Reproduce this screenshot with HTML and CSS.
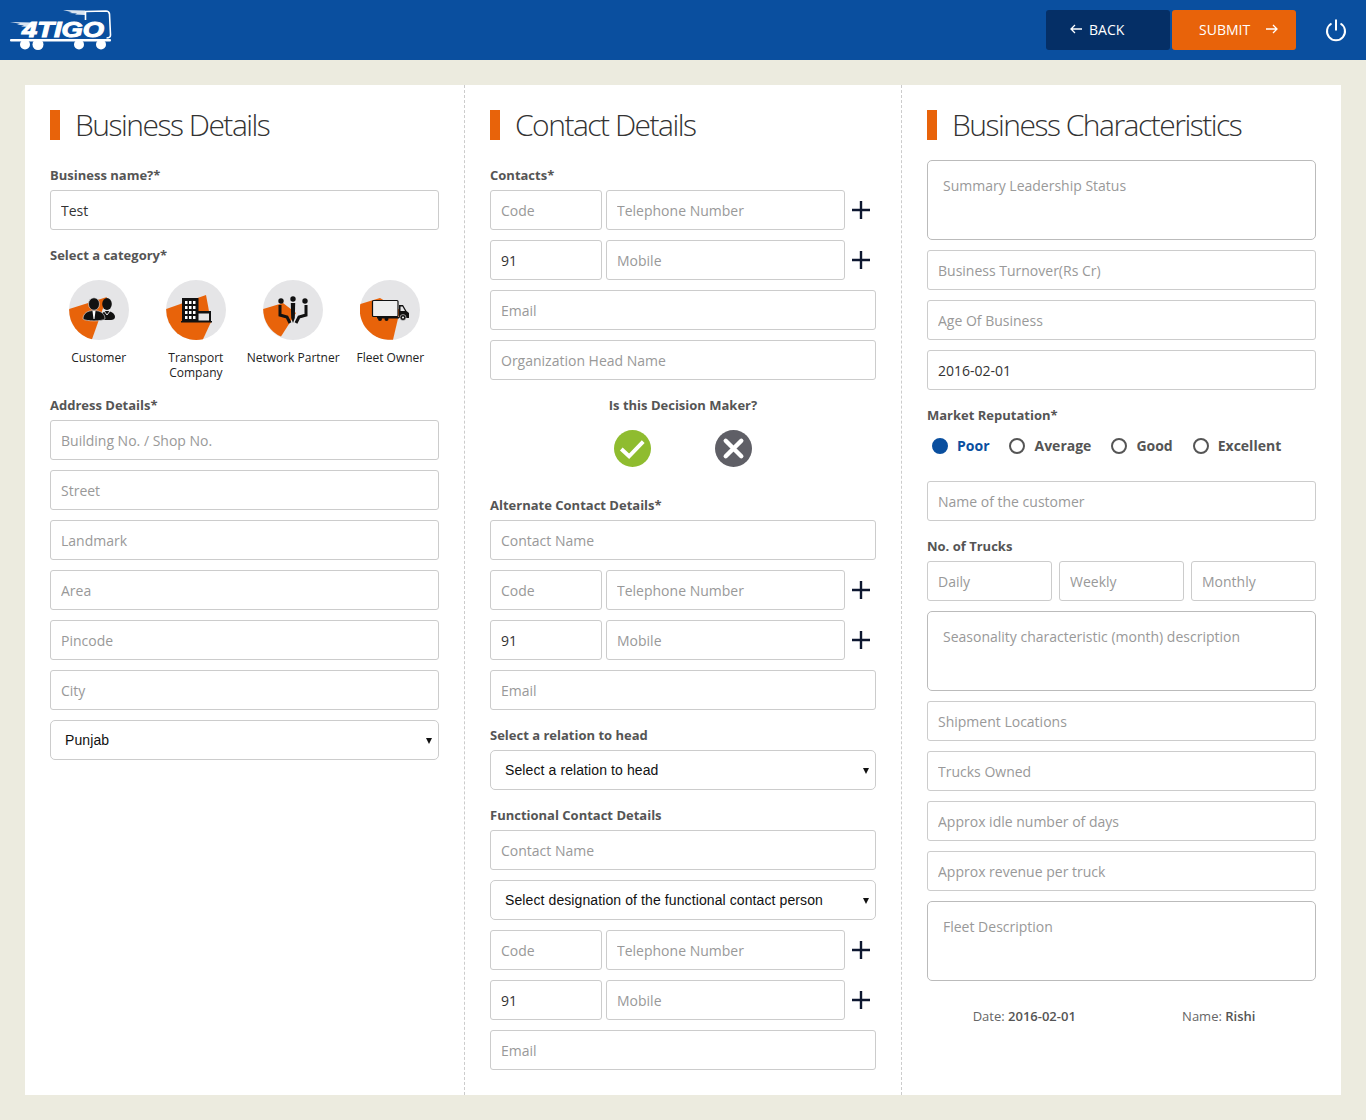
FILE: index.html
```html
<!DOCTYPE html>
<html lang="en">
<head>
    <meta charset="UTF-8">
    <meta name="viewport" content="width=device-width, initial-scale=1.0">
    <title>Business Details</title>
    <link rel="stylesheet" href="styles.css">
</head>
<body>
    <svg class="sprites" width="0" height="0">
        <symbol id="plus" viewBox="0 0 18 18">
            <path d="M9 0v18M0 9h18" stroke="#0d1730" stroke-width="2.4" fill="none"/>
        </symbol>
    </svg>

    <header class="topbar">
        <svg class="logo" width="104" height="50" viewBox="0 0 104 50">
            <g fill="#fff">
                <path d="M53 9l22 .5V14l-10-.5 2-1-8-.5 3-.8z" opacity=".85"/>
                <path d="M0 21l22 .5-2 4.500-9-.5 3-1-7-1 3-.8z" opacity=".85"/>
                <rect x="0" y="38" width="101" height="2.500" rx="1"/>
                <circle cx="15" cy="43.500" r="5"/>
                <circle cx="28" cy="43.500" r="5.500"/>
                <circle cx="69" cy="43.500" r="5"/>
                <circle cx="91" cy="43.500" r="5"/>
            </g>
            <path d="M75.500 19V10.500L96 10q3 0 3.500 3l1 21q0 3-4 3" fill="none" stroke="#fff" stroke-width="1.600"/>
            <text class="logo-text" x="12" y="36" textLength="82" lengthAdjust="spacingAndGlyphs">4TIGO</text>
        </svg>
        <div class="topbar-actions">
            <button class="btn btn-back" type="button">
                <svg width="12" height="10" viewBox="0 0 12 10"><path d="M12 5H1.500M5 1L1 5l4 4" fill="none" stroke="#fff" stroke-width="1.300"/></svg>
                BACK
            </button>
            <button class="btn btn-submit" type="button">
                SUBMIT
                <svg width="12" height="10" viewBox="0 0 12 10"><path d="M0 5h10.500M7 1l4 4-4 4" fill="none" stroke="#fff" stroke-width="1.300"/></svg>
            </button>
            <svg class="power" width="22" height="24" viewBox="0 0 22 24">
                <path d="M11 1.500v11M6.500 5.500a9 9 0 1 0 9 0" fill="none" stroke="#fff" stroke-width="2"/>
            </svg>
        </div>
    </header>

    <main class="page">
        <div class="panel">
            <section class="col">
                <h2 class="title">Business Details</h2>
                <label class="lbl lbl-first">Business name?*</label>
                <input class="inp" type="text" value="Test">

                <label class="lbl">Select a category*</label>
                <div class="cats">
                    <div class="cat">
                        <svg width="60" height="60" viewBox="0 0 60 60">
                            <circle cx="30" cy="30" r="30" fill="#e5e5e7"/>
                            <path d="M.2 29L38 17 23 59.200A30 30 0 0 1 .2 29z" fill="#e8630a"/>
                            <ellipse cx="38" cy="24" rx="4.800" ry="6" fill="#111"/>
                            <path d="M32 38c0-5 3-7 6-7s8 2 8 6c0 2-2 3-4 3h-8z" fill="#111"/>
                            <path d="M35 31l3 4 3-4" fill="none" stroke="#e5e5e7" stroke-width="1"/>
                            <ellipse cx="25" cy="24" rx="5.500" ry="6.200" fill="#111" stroke="#e5e5e7" stroke-width=".6"/>
                            <path d="M14 39c0-6 5-8.500 11-8.500S36 33 36 39c-3 2.500-19 2.500-22 0z" fill="#111" stroke="#e5e5e7" stroke-width=".6"/>
                            <path d="M23.500 31h3l-1 8h-1z" fill="#fff"/>
                        </svg>
                        <span>Customer</span>
                    </div>
                    <div class="cat">
                        <svg width="60" height="60" viewBox="0 0 60 60">
                            <circle cx="30" cy="30" r="30" fill="#e5e5e7"/>
                            <path d="M.2 29L40 15l5 27-8 17.200A30 30 0 0 1 .2 29z" fill="#e8630a"/>
                            <path d="M16 18h16.500v13H45v10h1v1.500H15V41h1z" fill="#111"/>
                            <path d="M32.500 33.500H43v7H32.500z" fill="#e5e5e7"/>
                            <path d="M19 21h2.500v3H19zM23 21h2.500v3H23zM27 21h2.500v3H27zM19 26h2.500v3H19zM23 26h2.500v3H23zM27 26h2.500v3H27zM19 31h2.500v3H19zM23 31h2.500v3H23zM27 31h2.500v3H27zM19 36h2.500v3H19zM23 36h2.500v3H23zM27 36h2.500v3H27z" fill="#fff"/>
                        </svg>
                        <span>Transport Company</span>
                    </div>
                    <div class="cat">
                        <svg width="60" height="60" viewBox="0 0 60 60">
                            <circle cx="30" cy="30" r="30" fill="#e5e5e7"/>
                            <path d="M.2 29L20 23l13 10-15 23.500A30 30 0 0 1 .2 29z" fill="#e8630a"/>
                            <circle cx="18" cy="21" r="2.700" fill="#111"/>
                            <circle cx="30" cy="19" r="2.700" fill="#111"/>
                            <circle cx="42" cy="21" r="2.700" fill="#111"/>
                            <path d="M27.800 23h4.400l-.4 15-1.800 5-1.800-5z" fill="#111"/>
                            <path d="M17 25v10l7 2 3 6M43 25v10l-7 2-3 6" fill="none" stroke="#111" stroke-width="3"/>
                        </svg>
                        <span>Network Partner</span>
                    </div>
                    <div class="cat">
                        <svg width="60" height="60" viewBox="0 0 60 60">
                            <circle cx="30" cy="30" r="30" fill="#e5e5e7"/>
                            <path d="M.4 24L20 18l20 12-7 29.700A30 30 0 0 1 .4 24z" fill="#e8630a"/>
                            <rect x="12.500" y="20.500" width="25.500" height="16" rx="1" fill="#eee" stroke="#111" stroke-width="1.200"/>
                            <path d="M39 25h4l3.500 6 2.500 2v5h-10zM17 37h22v1.500H17z" fill="#111"/>
                            <path d="M40.500 26.500h2l2.500 4.500h-4.500z" fill="#e5e5e7"/>
                            <circle cx="20" cy="39" r="2" fill="#111"/>
                            <circle cx="26.500" cy="39" r="2" fill="#111"/>
                            <circle cx="43" cy="37.500" r="3" fill="#111" stroke="#e5e5e7" stroke-width=".6"/>
                            <circle cx="43" cy="37.500" r="1.100" fill="#e5e5e7"/>
                        </svg>
                        <span>Fleet Owner</span>
                    </div>
                </div>

                <label class="lbl">Address Details*</label>
                <div class="stack">
                    <input class="inp" type="text" placeholder="Building No. / Shop No.">
                    <input class="inp" type="text" placeholder="Street">
                    <input class="inp" type="text" placeholder="Landmark">
                    <input class="inp" type="text" placeholder="Area">
                    <input class="inp" type="text" placeholder="Pincode">
                    <input class="inp" type="text" placeholder="City">
                    <div class="sel-wrap">
                        <select class="sel"><option>Punjab</option></select>
                    </div>
                </div>
            </section>

            <section class="col">
                <h2 class="title">Contact Details</h2>
                <label class="lbl lbl-first">Contacts*</label>
                <div class="stack">
                    <div class="phone">
                        <input class="inp code" type="text" placeholder="Code">
                        <input class="inp num" type="text" placeholder="Telephone Number">
                        <svg class="plus" width="18" height="18"><use href="#plus"/></svg>
                    </div>
                    <div class="phone">
                        <input class="inp code" type="text" value="91">
                        <input class="inp num" type="text" placeholder="Mobile">
                        <svg class="plus" width="18" height="18"><use href="#plus"/></svg>
                    </div>
                    <input class="inp" type="text" placeholder="Email">
                    <input class="inp" type="text" placeholder="Organization Head Name">
                </div>

                <label class="lbl lbl-center">Is this Decision Maker?</label>
                <div class="decision">
                    <svg width="37" height="37" viewBox="0 0 38 38">
                        <circle cx="19" cy="19" r="19" fill="#8fbc2f"/>
                        <path d="M7.500 19.500l8 7.500L30 12" fill="none" stroke="#fff" stroke-width="4"/>
                    </svg>
                    <svg width="37" height="37" viewBox="0 0 38 38">
                        <circle cx="19" cy="19" r="19" fill="#5f5f66"/>
                        <path d="M11 11l16 16M27 11L11 27" fill="none" stroke="#fff" stroke-width="4.500" stroke-linecap="round"/>
                    </svg>
                </div>

                <label class="lbl lbl-alt">Alternate Contact Details*</label>
                <div class="stack">
                    <input class="inp" type="text" placeholder="Contact Name">
                    <div class="phone">
                        <input class="inp code" type="text" placeholder="Code">
                        <input class="inp num" type="text" placeholder="Telephone Number">
                        <svg class="plus" width="18" height="18"><use href="#plus"/></svg>
                    </div>
                    <div class="phone">
                        <input class="inp code" type="text" value="91">
                        <input class="inp num" type="text" placeholder="Mobile">
                        <svg class="plus" width="18" height="18"><use href="#plus"/></svg>
                    </div>
                    <input class="inp" type="text" placeholder="Email">
                </div>

                <label class="lbl">Select a relation to head</label>
                <div class="sel-wrap">
                    <select class="sel"><option>Select a relation to head</option></select>
                </div>

                <label class="lbl">Functional Contact Details</label>
                <div class="stack">
                    <input class="inp" type="text" placeholder="Contact Name">
                    <div class="sel-wrap">
                        <select class="sel"><option>Select designation of the functional contact person</option></select>
                    </div>
                    <div class="phone">
                        <input class="inp code" type="text" placeholder="Code">
                        <input class="inp num" type="text" placeholder="Telephone Number">
                        <svg class="plus" width="18" height="18"><use href="#plus"/></svg>
                    </div>
                    <div class="phone">
                        <input class="inp code" type="text" value="91">
                        <input class="inp num" type="text" placeholder="Mobile">
                        <svg class="plus" width="18" height="18"><use href="#plus"/></svg>
                    </div>
                    <input class="inp" type="text" placeholder="Email">
                </div>
            </section>

            <section class="col">
                <h2 class="title">Business Characteristics</h2>
                <div class="stack stack-top">
                    <textarea class="area" placeholder="Summary Leadership Status"></textarea>
                    <input class="inp" type="text" placeholder="Business Turnover(Rs Cr)">
                    <input class="inp" type="text" placeholder="Age Of Business">
                    <input class="inp" type="text" value="2016-02-01">
                </div>

                <label class="lbl">Market Reputation*</label>
                <div class="radios">
                    <span class="radio radio-on">Poor</span>
                    <span class="radio">Average</span>
                    <span class="radio">Good</span>
                    <span class="radio">Excellent</span>
                </div>
                <input class="inp" type="text" placeholder="Name of the customer">

                <label class="lbl">No. of Trucks</label>
                <div class="stack">
                    <div class="trucks">
                        <input class="inp" type="text" placeholder="Daily">
                        <input class="inp" type="text" placeholder="Weekly">
                        <input class="inp" type="text" placeholder="Monthly">
                    </div>
                    <textarea class="area" placeholder="Seasonality characteristic (month) description"></textarea>
                    <input class="inp" type="text" placeholder="Shipment Locations">
                    <input class="inp" type="text" placeholder="Trucks Owned">
                    <input class="inp" type="text" placeholder="Approx idle number of days">
                    <input class="inp" type="text" placeholder="Approx revenue per truck">
                    <textarea class="area" placeholder="Fleet Description"></textarea>
                </div>

                <div class="signoff">
                    <span>Date: <b>2016-02-01</b></span>
                    <span>Name: <b>Rishi</b></span>
                </div>
            </section>
        </div>
    </main>
</body>
</html>
```

FILE: styles.css
```css
/* 4TIGO business form */
* {
    box-sizing: border-box;
}

body {
    margin: 0;
    background-color: #ecebdf;
    font-family: "Open Sans", sans-serif;
    font-size: 14px;
    color: #333;
}

.sprites {
    display: block;
    height: 0;
}

/* top bar */
.topbar {
    display: flex;
    justify-content: space-between;
    align-items: center;
    height: 60px;
    padding-left: 10px;
    background-color: #0a4f9f;
}

.logo {
    display: block;
    align-self: flex-start;
    margin-top: 1px;
}

.logo-text {
    font-family: "Liberation Sans", sans-serif;
    font-size: 22px;
    font-weight: 700;
    font-style: italic;
    fill: #fff;
    stroke: #fff;
    stroke-width: 1px;
}

.topbar-actions {
    display: flex;
    align-items: center;
    gap: 2px;
    padding-right: 19px;
}

.btn {
    display: flex;
    align-items: center;
    gap: 7px;
    width: 124px;
    height: 40px;
    padding: 0 0 2px 24px;
    border: none;
    border-radius: 3px;
    color: #fff;
    font-family: "Open Sans", sans-serif;
    font-size: 14px;
}

.btn-back {
    background-color: #052f66;
}

.btn-submit {
    gap: 16px;
    padding-left: 27px;
    background-color: #e8630a;
}

.power {
    margin-left: 27px;
}

/* main panel */
.page {
    padding: 25px;
}

.panel {
    display: grid;
    grid-template-columns: 440px 437px 439px;
    height: 1010px;
    background-color: #fff;
}

.col {
    padding: 25px;
    border-right: 1px dashed #ccc;
}

.col:last-child {
    border-right: none;
}

.title {
    height: 30px;
    margin: 0;
    padding-left: 15px;
    border-left: 10px solid #e8630a;
    font-size: 30px;
    font-weight: 300;
    line-height: 30px;
    letter-spacing: -1.5px;
    color: #333;
    white-space: nowrap;
}

.lbl {
    display: block;
    height: 20px;
    margin: 15px 0 5px;
    font-size: 13px;
    font-weight: 700;
    line-height: 20px;
    color: #555;
}

.lbl-first {
    margin-top: 25px;
}

.lbl-center {
    text-align: center;
}

.lbl-alt {
    margin-top: 28px;
}

.stack {
    display: flex;
    flex-direction: column;
    gap: 10px;
}

.stack-top {
    margin-top: 20px;
}

.inp {
    display: block;
    width: 100%;
    height: 40px;
    padding: 0 10px;
    border: 1px solid #ccc;
    border-radius: 3px;
    background-color: #fff;
    font-family: "Open Sans", sans-serif;
    font-size: 14px;
    color: #333;
}

.area {
    display: block;
    width: 100%;
    height: 80px;
    padding: 15px;
    border: 1px solid #bbb;
    border-radius: 5px;
    font-family: "Open Sans", sans-serif;
    font-size: 14px;
    resize: none;
}

.inp::placeholder,
.area::placeholder {
    color: #999;
    opacity: 1;
}

/* phone rows */
.phone {
    display: flex;
    align-items: center;
    gap: 4px;
}

.phone .code {
    flex: 0 0 112px;
    width: 112px;
}

.phone .num {
    flex: 0 0 239px;
    width: 239px;
}

.plus {
    flex: none;
    margin-left: 3px;
}

/* select with own arrow */
.sel-wrap {
    position: relative;
}

.sel-wrap::after {
    content: "";
    position: absolute;
    top: 18px;
    right: 7px;
    border-top: 6px solid #111;
    border-left: 3px solid transparent;
    border-right: 3px solid transparent;
}

.sel {
    display: block;
    width: 100%;
    height: 40px;
    padding: 0 14px;
    border: 1px solid #ccc;
    border-radius: 5px;
    background-color: #fff;
    font-family: "Liberation Sans", Arial, sans-serif;
    font-size: 14px;
    letter-spacing: 0.1px;
    color: #111;
    appearance: none;
}

/* categories */
.cats {
    display: grid;
    grid-template-columns: repeat(4, 1fr);
    margin-top: 15px;
}

.cat {
    display: flex;
    flex-direction: column;
    align-items: center;
    text-align: center;
    font-size: 12px;
    line-height: 15px;
    color: #222;
}

.cat span {
    margin-top: 10px;
    padding: 0 12px;
}

.cat:nth-child(3) span,
.cat:nth-child(4) span {
    padding: 0;
    white-space: nowrap;
}

/* decision icons */
.decision {
    display: flex;
    justify-content: center;
    gap: 64px;
    margin-top: 15px;
}

/* market reputation */
.radios {
    display: flex;
    gap: 20px;
    height: 20px;
    margin: 11px 0 25px 5px;
    font-size: 14px;
    font-weight: 700;
    line-height: 20px;
    color: #555;
}

.radio {
    display: flex;
    align-items: center;
    gap: 9px;
}

.radio::before {
    content: "";
    box-sizing: border-box;
    width: 16px;
    height: 16px;
    border: 2px solid #555;
    border-radius: 50%;
}

.radio-on {
    color: #0a4f9f;
}

.radio-on::before {
    border-color: #0a4f9f;
    background-color: #0a4f9f;
}

.trucks {
    display: grid;
    grid-template-columns: repeat(3, 125px);
    gap: 7px;
}

.signoff {
    display: grid;
    grid-template-columns: 1fr 1fr;
    margin-top: 25px;
    text-align: center;
    font-size: 13px;
    line-height: 20px;
    color: #666;
}

.signoff b {
    font-weight: 600;
    color: #555;
}
```
